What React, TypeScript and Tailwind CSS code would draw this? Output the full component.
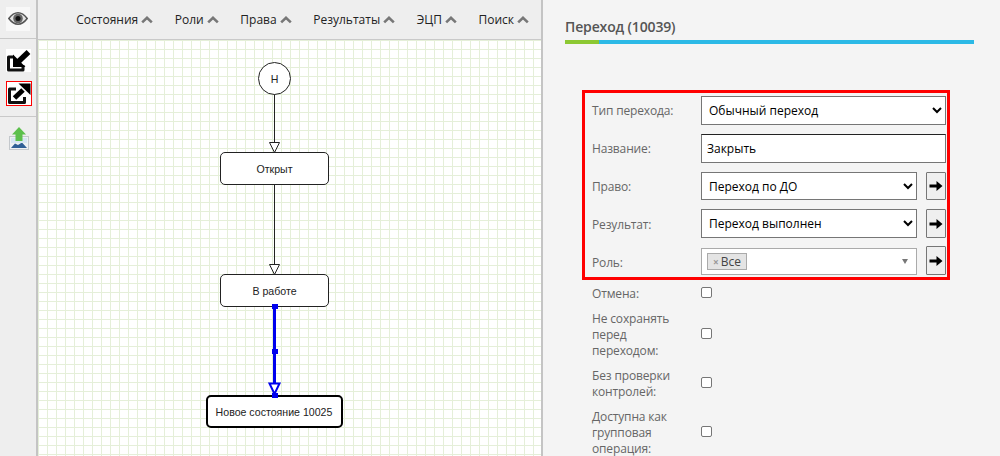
import React from "react";

function Chevron() {
  return (
    <svg width="12" height="8" viewBox="0 0 12 8" className="ml-[3px] mt-[1px]">
      <path d="M1.2 6.4 L6 1.8 L10.8 6.4" fill="none" stroke="#777" strokeWidth="2.6" />
    </svg>
  );
}

function ArrowGlyph() {
  return (
    <svg width="14" height="12" viewBox="0 0 14 12">
      <path d="M0.5 4.5H7.5V1L13.5 6L7.5 11V7.5H0.5Z" fill="#000" />
    </svg>
  );
}

function ArrowButton({ h }: { h: string }) {
  return (
    <button className={`ml-[9px] flex w-[20px] items-center justify-center rounded-[1px] border border-[#767676] bg-[#efefef] ${h}`}>
      <ArrowGlyph />
    </button>
  );
}

function EyeIcon() {
  return (
    <div className="flex h-[24px] w-[24px] items-center justify-center bg-[#f8f8f8]">
      <svg width="20" height="13" viewBox="0 0 20 13">
        <path d="M0.8 6.5C4 2.2 7 0.8 10 0.8s6 1.4 9.2 5.7C16 10.8 13 12.2 10 12.2S4 10.8 0.8 6.5Z" fill="#e4e4e4" stroke="#555" strokeWidth="1.5" />
        <circle cx="10" cy="6.5" r="4.8" fill="#666" />
        <circle cx="10" cy="6.5" r="2.5" fill="#111" />
      </svg>
    </div>
  );
}

function ImportIcon() {
  return (
    <svg width="25" height="23" viewBox="0 0 25 23" className="bg-white">
      <path d="M8 8H2.5V21H17V16" fill="none" stroke="#111" strokeWidth="3" strokeLinejoin="round" />
      <path d="M22.5 3L12.5 12.5" stroke="#000" strokeWidth="5.5" />
      <path d="M7 5.5V18H19.5Z" fill="#000" />
    </svg>
  );
}

function ExportIcon() {
  return (
    <div className="flex h-[25px] w-[26px] items-center justify-center border border-[#ff0000] bg-white">
      <svg width="24" height="23" viewBox="0 0 24 23">
        <path d="M9 7H2.5V20.5H17.5V15" fill="none" stroke="#111" strokeWidth="3" strokeLinejoin="round" />
        <path d="M7.5 16L16 8" stroke="#000" strokeWidth="5" />
        <path d="M11.5 1.5H23.5V13Z" fill="#000" />
      </svg>
    </div>
  );
}

function UploadIcon() {
  return (
    <svg width="20" height="23" viewBox="0 0 20 23">
      <rect x="0.5" y="9.5" width="19" height="13" fill="#eef1f3" stroke="#c4c8cc" />
      <path d="M2 21L6 16.5L9 18L13 15.5L18 21Z" fill="#2f5f96" />
      <path d="M2 16H18V11H2Z" fill="#d6e6f2" />
      <path d="M10 0L17 7.5H13.5V14H6.5V7.5H3Z" fill="#5cc04c" />
    </svg>
  );
}

const menu = ["Состояния", "Роли", "Права", "Результаты", "ЭЦП", "Поиск"];

function Diagram() {
  const nodeBase =
    "absolute flex items-center justify-center bg-white pt-[2px] text-[10.6px] text-[#222] font-['Liberation_Sans',sans-serif]";
  return (
    <div className="relative flex-1 bg-white bg-[linear-gradient(to_right,#e5efd9_1px,transparent_1px),linear-gradient(to_bottom,#e5efd9_1px,transparent_1px)] bg-[size:9px_9px]">
      <svg className="absolute left-0 top-0" width="504" height="416" viewBox="38 40 504 416">
        <line x1="274.5" y1="94" x2="274.5" y2="142" stroke="#222" strokeWidth="1" />
        <path d="M269.5 142.5H279.5L274.5 152.5Z" fill="#fff" stroke="#222" />
        <line x1="274.5" y1="184" x2="274.5" y2="264" stroke="#222" strokeWidth="1" />
        <path d="M269.5 264.5H279.5L274.5 274.5Z" fill="#fff" stroke="#222" />
        <line x1="274.5" y1="306" x2="274.5" y2="384" stroke="#0000ee" strokeWidth="3" />
        <path d="M269.5 383.5H279.5L274.5 394Z" fill="#fff" stroke="#0000ee" strokeWidth="2" />
      </svg>
      <div className={`${nodeBase} left-[220px] top-[22px] h-[33px] w-[33px] rounded-full border border-[#222]`}>
        Н
      </div>
      <div className={`${nodeBase} left-[182px] top-[112px] h-[33px] w-[109px] rounded-[5px] border border-[#222]`}>Открыт</div>
      <div className={`${nodeBase} left-[182px] top-[234px] h-[33px] w-[109px] rounded-[5px] border border-[#222]`}>В работе</div>
      <div className={`${nodeBase} left-[168px] top-[355px] h-[33px] w-[137px] rounded-[5px] border-2 border-black pr-[1px]`}>Новое состояние 10025</div>
      <div className="absolute left-[234px] top-[264px] h-[5px] w-[6px] bg-[#0000ee]" />
      <div className="absolute left-[234px] top-[309px] h-[5px] w-[6px] bg-[#0000ee]" />
      <div className="absolute left-[234px] top-[353px] h-[5px] w-[6px] bg-[#0000ee]" />
    </div>
  );
}

const selectCls =
  "h-full w-full rounded-none border border-[#767676] bg-white pl-[3px] text-[12px] text-black outline-none";

function Label({ children }: { children: React.ReactNode }) {
  return <div className="text-[12px] leading-[16px] tracking-[-0.15px] text-[#666]">{children}</div>;
}

function CheckRow({ label, className }: { label: React.ReactNode; className: string }) {
  return (
    <div className={`flex items-center pl-[10px] ${className}`}>
      <div className="w-[109px]">
        <Label>{label}</Label>
      </div>
      <input type="checkbox" className="m-0 mb-[3px] h-[11px] w-[11px] appearance-none rounded-[2px] border border-[#767676] bg-white" />
    </div>
  );
}

export default function App() {
  return (
    <div className="flex h-[456px] w-[1000px] overflow-hidden bg-[#f4f4f4] font-['Open_Sans',sans-serif]">
      {/* left tool rail */}
      <aside className="flex w-[38px] flex-col border-r-2 border-[#c4c4c4] bg-[#eeeeee]">
        <div className="flex h-[39px] items-center justify-center border-b border-[#c9c9c9] pb-[1px] pr-[1px]">
          <EyeIcon />
        </div>
        <div className="flex h-[78px] flex-col items-start gap-[9px] border-b border-[#c9c9c9] pl-[6px] pt-[10px]">
          <ImportIcon />
          <ExportIcon />
        </div>
        <div className="flex justify-start pl-[9px] pt-[10px]">
          <UploadIcon />
        </div>
      </aside>

      {/* editor */}
      <main className="flex w-[505px] flex-col border-r-2 border-[#c4c4c4]">
        <header className="flex h-[40px] items-center justify-end gap-[21.6px] border-b border-[#c9c9c9] bg-[#eeeeee] pr-[12px]">
          {menu.map((m) => (
            <div key={m} className="flex items-center text-[12px] text-[#222]">
              {m}
              <Chevron />
            </div>
          ))}
        </header>
        <Diagram />
      </main>

      {/* properties */}
      <section className="w-[457px] pl-[22px] pt-[18px]">
        <h2 className="text-[14px] leading-[18px] font-semibold tracking-[-0.15px] text-[#555]">Переход (10039)</h2>
        <div className="mt-[4px] flex h-[4px] w-[409px]">
          <div className="w-[34px] bg-[#8cc832]" />
          <div className="flex-1 bg-[#2cb9e6]" />
        </div>

        <div className="ml-[17px] mt-[46px] h-[190px] w-[368px] border-[3px] border-[#ff0000] pl-[7px] pr-[1px] pt-[3px]">
          <div className="flex h-[29px] items-center">
            <div className="w-[109px]"><Label>Тип перехода:</Label></div>
            <div className="h-full w-[245px]">
              <select className={selectCls} defaultValue="a"><option value="a">Обычный переход</option></select>
            </div>
          </div>
          <div className="mt-[9px] flex h-[29px] items-center">
            <div className="w-[109px]"><Label>Название:</Label></div>
            <input
              defaultValue="Закрыть"
              className="h-full w-[245px] border border-[#767676] border-t-[#222] bg-white pl-[5px] text-[12px] text-black outline-none"
            />
          </div>
          <div className="mt-[9px] flex h-[28px] items-center">
            <div className="w-[109px] pt-[2px]"><Label>Право:</Label></div>
            <div className="h-full w-[216px]">
              <select className={selectCls} defaultValue="a"><option value="a">Переход по ДО</option></select>
            </div>
            <ArrowButton h="h-[28px]" />
          </div>
          <div className="mt-[9px] flex h-[29px] items-center">
            <div className="w-[109px] pt-[2px]"><Label>Результат:</Label></div>
            <div className="h-full w-[216px]">
              <select className={selectCls} defaultValue="a"><option value="a">Переход выполнен</option></select>
            </div>
            <ArrowButton h="h-[29px]" />
          </div>
          <div className="mt-[8px] flex h-[29px] items-end">
            <div className="flex h-[29px] w-[109px] items-center pt-[5px]"><Label>Роль:</Label></div>
            <div className="flex h-[27px] w-[216px] items-center justify-between border border-[#aaaaaa] bg-white pl-[5px] pr-[8px]">
              <span className="flex h-[17px] items-center border border-[#aaaaaa] bg-[#e4e4e4] pl-[5px] pr-[5px] text-[12px] leading-none text-[#444]">
                <span className="mr-[2px] text-[10px] font-bold text-[#999]">×</span>Все
              </span>
              <span className="h-0 w-0 border-x-[3px] border-t-[5px] border-x-transparent border-t-[#777]" />
            </div>
            <ArrowButton h="h-[29px]" />
          </div>
        </div>

        <div className="ml-[17px] mt-[6px] flex flex-col gap-[9px]">
          <CheckRow label="Отмена:" className="h-[16px]" />
          <CheckRow label={<>Не сохранять<br />перед<br />переходом:</>} className="" />
          <CheckRow label={<>Без проверки<br />контролей:</>} className="" />
          <CheckRow label={<>Доступна как<br />групповая<br />операция:</>} className="" />
        </div>
      </section>
    </div>
  );
}
